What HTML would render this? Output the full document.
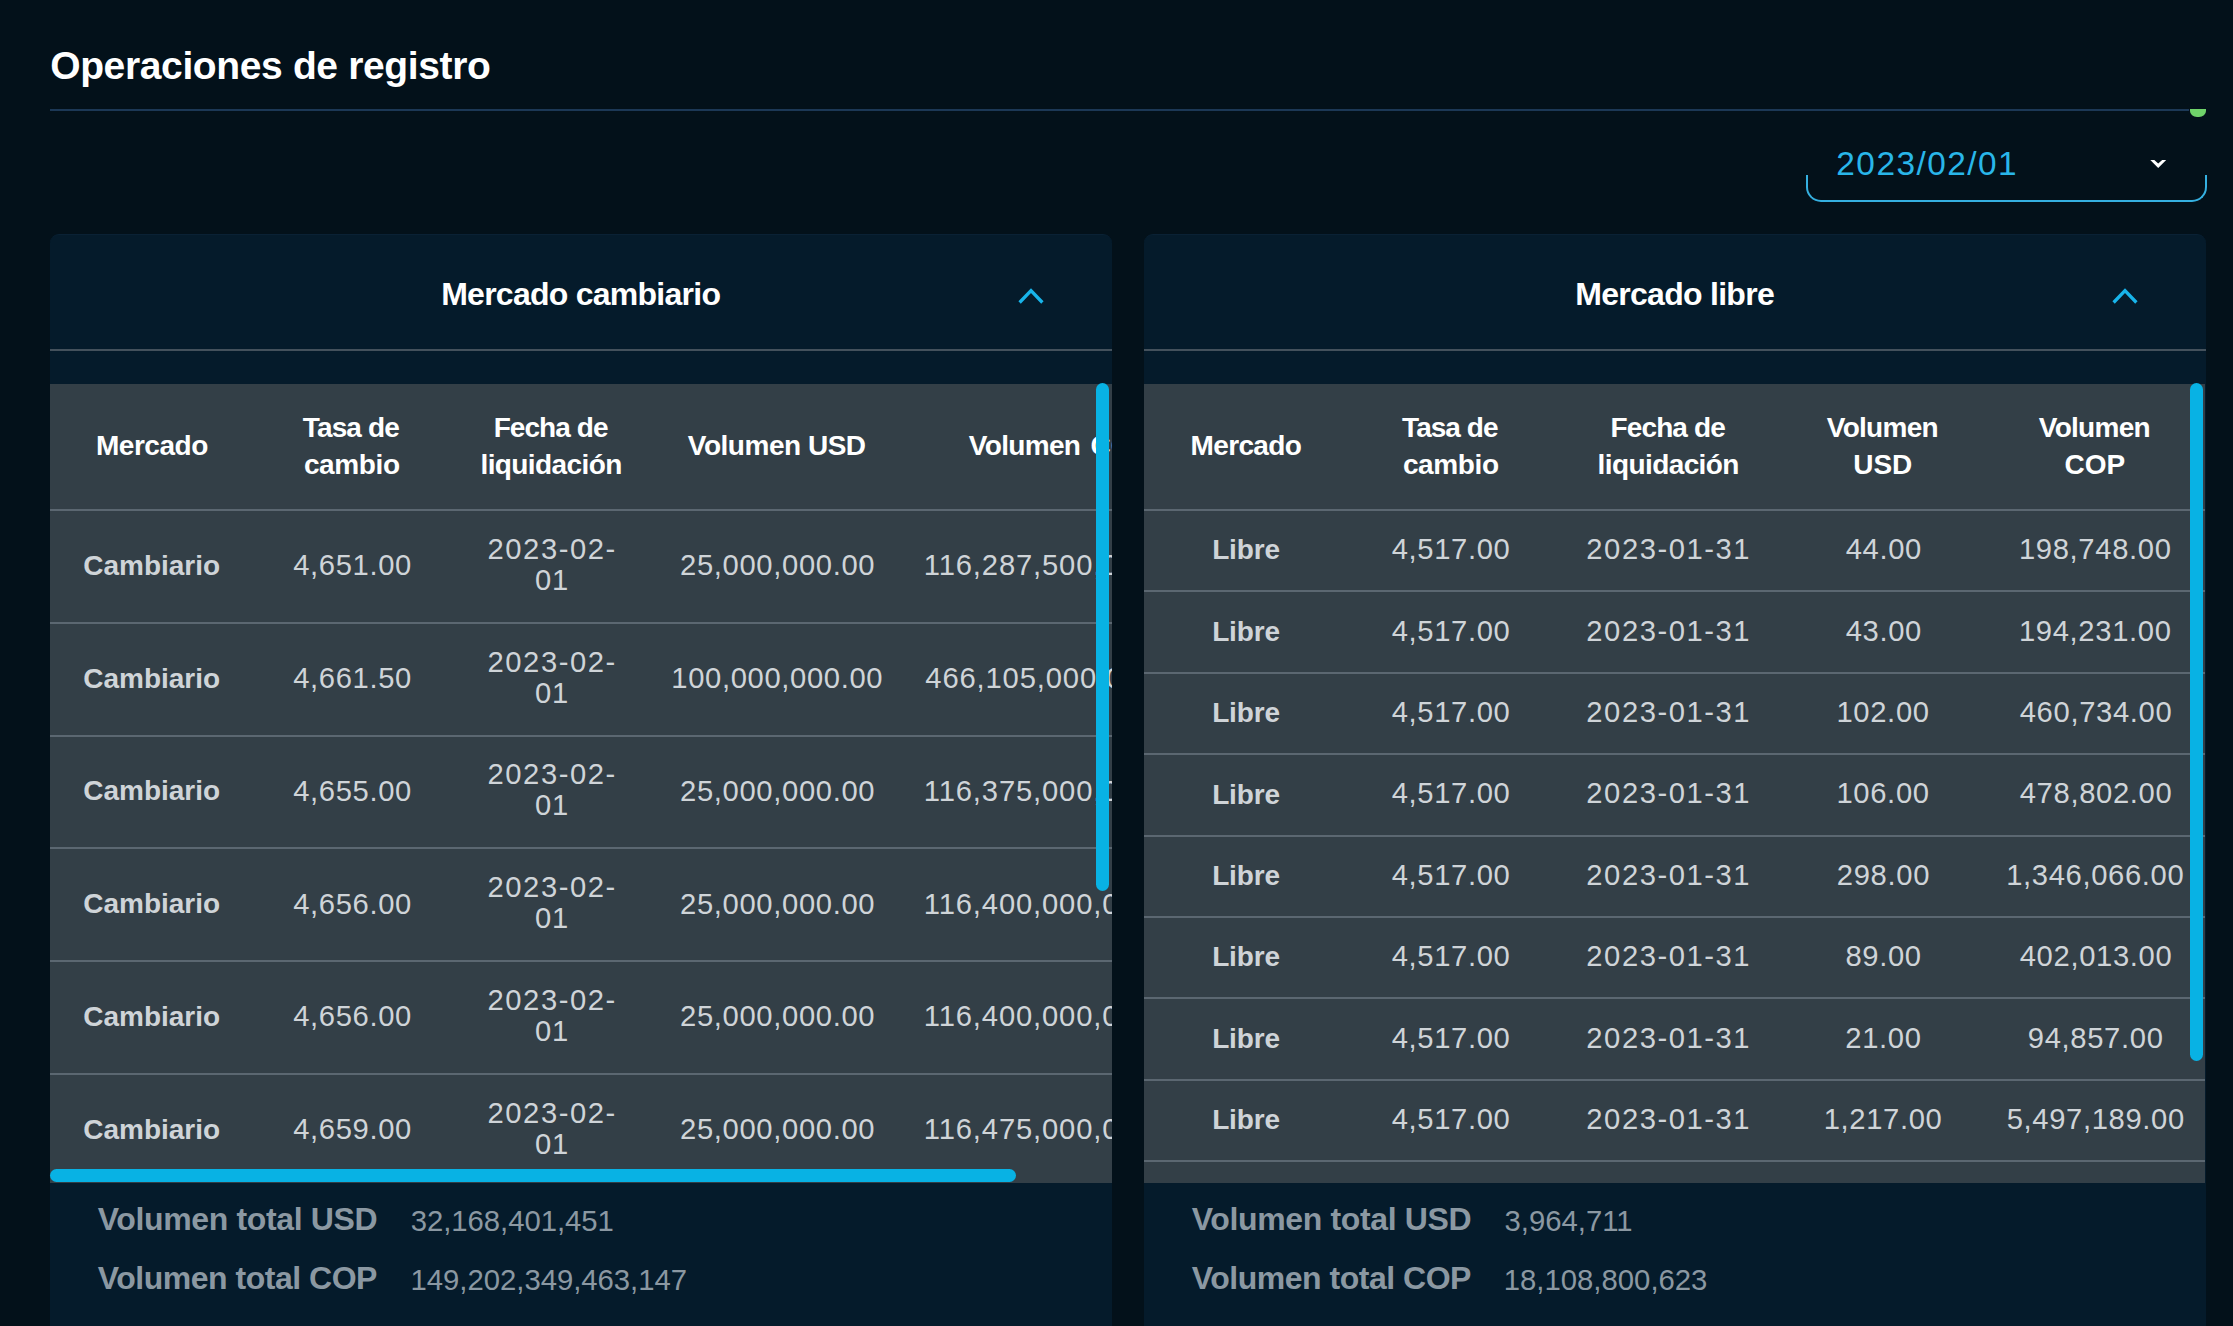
<!DOCTYPE html>
<html><head><meta charset="utf-8"><style>
html,body{margin:0;padding:0;}
body{width:2233px;height:1326px;overflow:hidden;background:#03111a;position:relative;font-family:"Liberation Sans",sans-serif;}
.t{position:absolute;white-space:nowrap;}
.r{position:absolute;box-sizing:border-box;}
svg.r{box-sizing:content-box;}
</style></head><body>
<div class="t" style="top:45.99px;font-size:39.00px;line-height:39.00px;font-weight:bold;color:#ffffff;letter-spacing:-0.365px;left:50.20px;">Operaciones de registro</div>
<div class="r" style="left:50px;top:109px;width:2139px;height:2px;background:#1c3856;"></div>
<div class="r" style="left:2190px;top:109px;width:16px;height:8px;background:#6fd36a;border-radius:0 0 7px 7px / 0 0 6px 6px;"></div>
<div class="t" style="top:146.73px;font-size:33.40px;line-height:33.40px;font-weight:normal;color:#29b6e9;letter-spacing:1.461px;left:1836.32px;">2023/02/01</div>
<div class="r" style="left:1805.5px;top:175px;width:401px;height:27px;border:2.5px solid #35b0e0;border-top:none;border-radius:0 0 15px 15px;"></div>
<svg class="r" style="left:2148px;top:157px" width="20" height="14" viewBox="0 0 20 14"><path d="M2.3 3 L6.3 3 L10.2 6.6 L14.2 3 L18.2 3 L10.2 11 Z" fill="#fff"/></svg>
<div class="r" style="left:50px;top:234px;width:1062px;height:1200px;background:#051b2b;border-radius:9px;border-top:1px solid #0a2134;"></div>
<div class="r" style="left:50px;top:349px;width:1062px;height:2px;background:#44515c;"></div>
<div class="t" style="top:278.41px;font-size:32.00px;line-height:32.00px;font-weight:bold;color:#ffffff;letter-spacing:-0.742px;left:441.16px;">Mercado cambiario</div>
<svg class="r" style="left:1015px;top:283px" width="32" height="26" viewBox="0 0 32 26"><path d="M4.6 19.5 L16 7.6 L27.4 19.5" fill="none" stroke="#18b4ea" stroke-width="3.3"/></svg>
<div class="r" style="left:0;top:0;width:2233px;height:1326px;clip-path:inset(384px 1121px 143px 50px);"><div class="r" style="left:50px;top:384px;width:1062px;height:799px;background:#333f47;"></div><div class="t" style="top:432.30px;font-size:28.00px;line-height:28.00px;font-weight:bold;color:#ffffff;letter-spacing:-0.480px;left:95.98px;">Mercado</div><div class="t" style="top:413.60px;font-size:28.00px;line-height:28.00px;font-weight:bold;color:#ffffff;letter-spacing:-0.867px;left:302.79px;">Tasa de</div><div class="t" style="top:451.30px;font-size:28.00px;line-height:28.00px;font-weight:bold;color:#ffffff;letter-spacing:-0.368px;left:303.91px;">cambio</div><div class="t" style="top:413.60px;font-size:28.00px;line-height:28.00px;font-weight:bold;color:#ffffff;letter-spacing:-0.936px;left:493.63px;">Fecha de</div><div class="t" style="top:451.30px;font-size:28.00px;line-height:28.00px;font-weight:bold;color:#ffffff;letter-spacing:-0.589px;left:480.44px;">liquidación</div><div class="t" style="top:432.30px;font-size:28.00px;line-height:28.00px;font-weight:bold;color:#ffffff;letter-spacing:-0.476px;left:687.81px;">Volumen USD</div><div class="t" style="top:432.30px;font-size:28.00px;line-height:28.00px;font-weight:bold;color:#ffffff;letter-spacing:-0.668px;left:968.81px;">Volumen</div><div class="t" style="top:432.30px;font-size:28.00px;line-height:28.00px;font-weight:bold;color:#ffffff;letter-spacing:0.000px;left:1090.45px;">COP</div><div class="r" style="left:50px;top:509px;width:1062px;height:2px;background:#5b6771;"></div><div class="t" style="top:551.80px;font-size:28.00px;line-height:28.00px;font-weight:bold;color:#cfd4d8;letter-spacing:-0.010px;left:83.25px;">Cambiario</div><div class="t" style="top:551.28px;font-size:29.20px;line-height:29.20px;font-weight:normal;color:#cfd4d8;letter-spacing:0.650px;left:293.13px;">4,651.00</div><div class="t" style="top:534.78px;font-size:29.20px;line-height:29.20px;font-weight:normal;color:#cfd4d8;letter-spacing:1.550px;left:487.55px;">2023-02-</div><div class="t" style="top:565.78px;font-size:29.20px;line-height:29.20px;font-weight:normal;color:#cfd4d8;letter-spacing:0.650px;left:535.08px;">01</div><div class="t" style="top:551.28px;font-size:29.20px;line-height:29.20px;font-weight:normal;color:#cfd4d8;letter-spacing:0.650px;left:680.07px;">25,000,000.00</div><div class="t" style="top:551.28px;font-size:29.20px;line-height:29.20px;font-weight:normal;color:#cfd4d8;letter-spacing:0.850px;left:923.78px;">116,287,500,000.00</div><div class="r" style="left:50px;top:622px;width:1062px;height:2px;background:#5b6771;"></div><div class="t" style="top:664.55px;font-size:28.00px;line-height:28.00px;font-weight:bold;color:#cfd4d8;letter-spacing:-0.010px;left:83.25px;">Cambiario</div><div class="t" style="top:664.03px;font-size:29.20px;line-height:29.20px;font-weight:normal;color:#cfd4d8;letter-spacing:0.650px;left:293.13px;">4,661.50</div><div class="t" style="top:647.53px;font-size:29.20px;line-height:29.20px;font-weight:normal;color:#cfd4d8;letter-spacing:1.550px;left:487.55px;">2023-02-</div><div class="t" style="top:678.53px;font-size:29.20px;line-height:29.20px;font-weight:normal;color:#cfd4d8;letter-spacing:0.650px;left:535.08px;">01</div><div class="t" style="top:664.03px;font-size:29.20px;line-height:29.20px;font-weight:normal;color:#cfd4d8;letter-spacing:0.650px;left:671.25px;">100,000,000.00</div><div class="t" style="top:664.03px;font-size:29.20px;line-height:29.20px;font-weight:normal;color:#cfd4d8;letter-spacing:0.850px;left:925.33px;">466,105,000,000.00</div><div class="r" style="left:50px;top:735px;width:1062px;height:2px;background:#5b6771;"></div><div class="t" style="top:777.30px;font-size:28.00px;line-height:28.00px;font-weight:bold;color:#cfd4d8;letter-spacing:-0.010px;left:83.25px;">Cambiario</div><div class="t" style="top:776.78px;font-size:29.20px;line-height:29.20px;font-weight:normal;color:#cfd4d8;letter-spacing:0.650px;left:293.13px;">4,655.00</div><div class="t" style="top:760.28px;font-size:29.20px;line-height:29.20px;font-weight:normal;color:#cfd4d8;letter-spacing:1.550px;left:487.55px;">2023-02-</div><div class="t" style="top:791.28px;font-size:29.20px;line-height:29.20px;font-weight:normal;color:#cfd4d8;letter-spacing:0.650px;left:535.08px;">01</div><div class="t" style="top:776.78px;font-size:29.20px;line-height:29.20px;font-weight:normal;color:#cfd4d8;letter-spacing:0.650px;left:680.07px;">25,000,000.00</div><div class="t" style="top:776.78px;font-size:29.20px;line-height:29.20px;font-weight:normal;color:#cfd4d8;letter-spacing:0.850px;left:923.78px;">116,375,000,000.00</div><div class="r" style="left:50px;top:847px;width:1062px;height:2px;background:#5b6771;"></div><div class="t" style="top:890.05px;font-size:28.00px;line-height:28.00px;font-weight:bold;color:#cfd4d8;letter-spacing:-0.010px;left:83.25px;">Cambiario</div><div class="t" style="top:889.53px;font-size:29.20px;line-height:29.20px;font-weight:normal;color:#cfd4d8;letter-spacing:0.650px;left:293.13px;">4,656.00</div><div class="t" style="top:873.03px;font-size:29.20px;line-height:29.20px;font-weight:normal;color:#cfd4d8;letter-spacing:1.550px;left:487.55px;">2023-02-</div><div class="t" style="top:904.03px;font-size:29.20px;line-height:29.20px;font-weight:normal;color:#cfd4d8;letter-spacing:0.650px;left:535.08px;">01</div><div class="t" style="top:889.53px;font-size:29.20px;line-height:29.20px;font-weight:normal;color:#cfd4d8;letter-spacing:0.650px;left:680.07px;">25,000,000.00</div><div class="t" style="top:889.53px;font-size:29.20px;line-height:29.20px;font-weight:normal;color:#cfd4d8;letter-spacing:0.850px;left:923.78px;">116,400,000,000.00</div><div class="r" style="left:50px;top:960px;width:1062px;height:2px;background:#5b6771;"></div><div class="t" style="top:1002.80px;font-size:28.00px;line-height:28.00px;font-weight:bold;color:#cfd4d8;letter-spacing:-0.010px;left:83.25px;">Cambiario</div><div class="t" style="top:1002.28px;font-size:29.20px;line-height:29.20px;font-weight:normal;color:#cfd4d8;letter-spacing:0.650px;left:293.13px;">4,656.00</div><div class="t" style="top:985.78px;font-size:29.20px;line-height:29.20px;font-weight:normal;color:#cfd4d8;letter-spacing:1.550px;left:487.55px;">2023-02-</div><div class="t" style="top:1016.78px;font-size:29.20px;line-height:29.20px;font-weight:normal;color:#cfd4d8;letter-spacing:0.650px;left:535.08px;">01</div><div class="t" style="top:1002.28px;font-size:29.20px;line-height:29.20px;font-weight:normal;color:#cfd4d8;letter-spacing:0.650px;left:680.07px;">25,000,000.00</div><div class="t" style="top:1002.28px;font-size:29.20px;line-height:29.20px;font-weight:normal;color:#cfd4d8;letter-spacing:0.850px;left:923.78px;">116,400,000,000.00</div><div class="r" style="left:50px;top:1073px;width:1062px;height:2px;background:#5b6771;"></div><div class="t" style="top:1115.55px;font-size:28.00px;line-height:28.00px;font-weight:bold;color:#cfd4d8;letter-spacing:-0.010px;left:83.25px;">Cambiario</div><div class="t" style="top:1115.03px;font-size:29.20px;line-height:29.20px;font-weight:normal;color:#cfd4d8;letter-spacing:0.650px;left:293.13px;">4,659.00</div><div class="t" style="top:1098.53px;font-size:29.20px;line-height:29.20px;font-weight:normal;color:#cfd4d8;letter-spacing:1.550px;left:487.55px;">2023-02-</div><div class="t" style="top:1129.53px;font-size:29.20px;line-height:29.20px;font-weight:normal;color:#cfd4d8;letter-spacing:0.650px;left:535.08px;">01</div><div class="t" style="top:1115.03px;font-size:29.20px;line-height:29.20px;font-weight:normal;color:#cfd4d8;letter-spacing:0.650px;left:680.07px;">25,000,000.00</div><div class="t" style="top:1115.03px;font-size:29.20px;line-height:29.20px;font-weight:normal;color:#cfd4d8;letter-spacing:0.850px;left:923.78px;">116,475,000,000.00</div></div>
<div class="r" style="left:1096px;top:383px;width:12.5px;height:508px;background:#08b2e4;border-radius:7px;"></div>
<div class="r" style="left:50px;top:1168.5px;width:966px;height:13px;background:#08b2e4;border-radius:7px;"></div>
<div class="t" style="top:1203.41px;font-size:32.00px;line-height:32.00px;font-weight:bold;color:#8b98a2;letter-spacing:-0.360px;left:97.78px;">Volumen total USD</div>
<div class="t" style="top:1262.41px;font-size:32.00px;line-height:32.00px;font-weight:bold;color:#8b98a2;letter-spacing:-0.487px;left:97.78px;">Volumen total COP</div>
<div class="r" style="left:1144px;top:234px;width:1062px;height:1200px;background:#051b2b;border-radius:9px;border-top:1px solid #0a2134;"></div>
<div class="r" style="left:1144px;top:349px;width:1062px;height:2px;background:#44515c;"></div>
<div class="t" style="top:278.41px;font-size:32.00px;line-height:32.00px;font-weight:bold;color:#ffffff;letter-spacing:-0.711px;left:1575.21px;">Mercado libre</div>
<svg class="r" style="left:2109px;top:283px" width="32" height="26" viewBox="0 0 32 26"><path d="M4.6 19.5 L16 7.6 L27.4 19.5" fill="none" stroke="#18b4ea" stroke-width="3.3"/></svg>
<div class="r" style="left:0;top:0;width:2233px;height:1326px;clip-path:inset(384px 28px 143px 1144px);"><div class="r" style="left:1144px;top:384px;width:1062px;height:799px;background:#333f47;"></div><div class="t" style="top:432.30px;font-size:28.00px;line-height:28.00px;font-weight:bold;color:#ffffff;letter-spacing:-0.646px;left:1190.58px;">Mercado</div><div class="t" style="top:413.60px;font-size:28.00px;line-height:28.00px;font-weight:bold;color:#ffffff;letter-spacing:-0.967px;left:1402.09px;">Tasa de</div><div class="t" style="top:451.30px;font-size:28.00px;line-height:28.00px;font-weight:bold;color:#ffffff;letter-spacing:-0.368px;left:1402.91px;">cambio</div><div class="t" style="top:413.60px;font-size:28.00px;line-height:28.00px;font-weight:bold;color:#ffffff;letter-spacing:-0.893px;left:1610.58px;">Fecha de</div><div class="t" style="top:451.30px;font-size:28.00px;line-height:28.00px;font-weight:bold;color:#ffffff;letter-spacing:-0.589px;left:1597.54px;">liquidación</div><div class="t" style="top:413.60px;font-size:28.00px;line-height:28.00px;font-weight:bold;color:#ffffff;letter-spacing:-0.718px;left:1826.81px;">Volumen</div><div class="t" style="top:451.30px;font-size:28.00px;line-height:28.00px;font-weight:bold;color:#ffffff;letter-spacing:0.000px;left:1853.19px;">USD</div><div class="t" style="top:413.60px;font-size:28.00px;line-height:28.00px;font-weight:bold;color:#ffffff;letter-spacing:-0.718px;left:2038.81px;">Volumen</div><div class="t" style="top:451.30px;font-size:28.00px;line-height:28.00px;font-weight:bold;color:#ffffff;letter-spacing:0.000px;left:2064.57px;">COP</div><div class="r" style="left:1144px;top:509px;width:1062px;height:2px;background:#5b6771;"></div><div class="t" style="top:536.30px;font-size:28.00px;line-height:28.00px;font-weight:bold;color:#cfd4d8;letter-spacing:-0.156px;left:1212.13px;">Libre</div><div class="t" style="top:535.28px;font-size:29.20px;line-height:29.20px;font-weight:normal;color:#cfd4d8;letter-spacing:0.650px;left:1391.63px;">4,517.00</div><div class="t" style="top:535.28px;font-size:29.20px;line-height:29.20px;font-weight:normal;color:#cfd4d8;letter-spacing:1.550px;left:1586.32px;">2023-01-31</div><div class="t" style="top:535.28px;font-size:29.20px;line-height:29.20px;font-weight:normal;color:#cfd4d8;letter-spacing:0.650px;left:1845.70px;">44.00</div><div class="t" style="top:535.28px;font-size:29.20px;line-height:29.20px;font-weight:normal;color:#cfd4d8;letter-spacing:0.650px;left:2018.96px;">198,748.00</div><div class="r" style="left:1144px;top:590px;width:1062px;height:2px;background:#5b6771;"></div><div class="t" style="top:617.70px;font-size:28.00px;line-height:28.00px;font-weight:bold;color:#cfd4d8;letter-spacing:-0.156px;left:1212.13px;">Libre</div><div class="t" style="top:616.68px;font-size:29.20px;line-height:29.20px;font-weight:normal;color:#cfd4d8;letter-spacing:0.650px;left:1391.63px;">4,517.00</div><div class="t" style="top:616.68px;font-size:29.20px;line-height:29.20px;font-weight:normal;color:#cfd4d8;letter-spacing:1.550px;left:1586.32px;">2023-01-31</div><div class="t" style="top:616.68px;font-size:29.20px;line-height:29.20px;font-weight:normal;color:#cfd4d8;letter-spacing:0.650px;left:1845.70px;">43.00</div><div class="t" style="top:616.68px;font-size:29.20px;line-height:29.20px;font-weight:normal;color:#cfd4d8;letter-spacing:0.650px;left:2018.96px;">194,231.00</div><div class="r" style="left:1144px;top:672px;width:1062px;height:2px;background:#5b6771;"></div><div class="t" style="top:699.10px;font-size:28.00px;line-height:28.00px;font-weight:bold;color:#cfd4d8;letter-spacing:-0.156px;left:1212.13px;">Libre</div><div class="t" style="top:698.08px;font-size:29.20px;line-height:29.20px;font-weight:normal;color:#cfd4d8;letter-spacing:0.650px;left:1391.63px;">4,517.00</div><div class="t" style="top:698.08px;font-size:29.20px;line-height:29.20px;font-weight:normal;color:#cfd4d8;letter-spacing:1.550px;left:1586.32px;">2023-01-31</div><div class="t" style="top:698.08px;font-size:29.20px;line-height:29.20px;font-weight:normal;color:#cfd4d8;letter-spacing:0.650px;left:1836.48px;">102.00</div><div class="t" style="top:698.08px;font-size:29.20px;line-height:29.20px;font-weight:normal;color:#cfd4d8;letter-spacing:0.650px;left:2019.74px;">460,734.00</div><div class="r" style="left:1144px;top:753px;width:1062px;height:2px;background:#5b6771;"></div><div class="t" style="top:780.50px;font-size:28.00px;line-height:28.00px;font-weight:bold;color:#cfd4d8;letter-spacing:-0.156px;left:1212.13px;">Libre</div><div class="t" style="top:779.48px;font-size:29.20px;line-height:29.20px;font-weight:normal;color:#cfd4d8;letter-spacing:0.650px;left:1391.63px;">4,517.00</div><div class="t" style="top:779.48px;font-size:29.20px;line-height:29.20px;font-weight:normal;color:#cfd4d8;letter-spacing:1.550px;left:1586.32px;">2023-01-31</div><div class="t" style="top:779.48px;font-size:29.20px;line-height:29.20px;font-weight:normal;color:#cfd4d8;letter-spacing:0.650px;left:1836.48px;">106.00</div><div class="t" style="top:779.48px;font-size:29.20px;line-height:29.20px;font-weight:normal;color:#cfd4d8;letter-spacing:0.650px;left:2019.74px;">478,802.00</div><div class="r" style="left:1144px;top:835px;width:1062px;height:2px;background:#5b6771;"></div><div class="t" style="top:861.90px;font-size:28.00px;line-height:28.00px;font-weight:bold;color:#cfd4d8;letter-spacing:-0.156px;left:1212.13px;">Libre</div><div class="t" style="top:860.88px;font-size:29.20px;line-height:29.20px;font-weight:normal;color:#cfd4d8;letter-spacing:0.650px;left:1391.63px;">4,517.00</div><div class="t" style="top:860.88px;font-size:29.20px;line-height:29.20px;font-weight:normal;color:#cfd4d8;letter-spacing:1.550px;left:1586.32px;">2023-01-31</div><div class="t" style="top:860.88px;font-size:29.20px;line-height:29.20px;font-weight:normal;color:#cfd4d8;letter-spacing:0.650px;left:1836.86px;">298.00</div><div class="t" style="top:860.88px;font-size:29.20px;line-height:29.20px;font-weight:normal;color:#cfd4d8;letter-spacing:0.650px;left:2006.14px;">1,346,066.00</div><div class="r" style="left:1144px;top:916px;width:1062px;height:2px;background:#5b6771;"></div><div class="t" style="top:943.30px;font-size:28.00px;line-height:28.00px;font-weight:bold;color:#cfd4d8;letter-spacing:-0.156px;left:1212.13px;">Libre</div><div class="t" style="top:942.28px;font-size:29.20px;line-height:29.20px;font-weight:normal;color:#cfd4d8;letter-spacing:0.650px;left:1391.63px;">4,517.00</div><div class="t" style="top:942.28px;font-size:29.20px;line-height:29.20px;font-weight:normal;color:#cfd4d8;letter-spacing:1.550px;left:1586.32px;">2023-01-31</div><div class="t" style="top:942.28px;font-size:29.20px;line-height:29.20px;font-weight:normal;color:#cfd4d8;letter-spacing:0.650px;left:1845.40px;">89.00</div><div class="t" style="top:942.28px;font-size:29.20px;line-height:29.20px;font-weight:normal;color:#cfd4d8;letter-spacing:0.650px;left:2019.74px;">402,013.00</div><div class="r" style="left:1144px;top:997px;width:1062px;height:2px;background:#5b6771;"></div><div class="t" style="top:1024.70px;font-size:28.00px;line-height:28.00px;font-weight:bold;color:#cfd4d8;letter-spacing:-0.156px;left:1212.13px;">Libre</div><div class="t" style="top:1023.68px;font-size:29.20px;line-height:29.20px;font-weight:normal;color:#cfd4d8;letter-spacing:0.650px;left:1391.63px;">4,517.00</div><div class="t" style="top:1023.68px;font-size:29.20px;line-height:29.20px;font-weight:normal;color:#cfd4d8;letter-spacing:1.550px;left:1586.32px;">2023-01-31</div><div class="t" style="top:1023.68px;font-size:29.20px;line-height:29.20px;font-weight:normal;color:#cfd4d8;letter-spacing:0.650px;left:1845.30px;">21.00</div><div class="t" style="top:1023.68px;font-size:29.20px;line-height:29.20px;font-weight:normal;color:#cfd4d8;letter-spacing:0.650px;left:2027.83px;">94,857.00</div><div class="r" style="left:1144px;top:1079px;width:1062px;height:2px;background:#5b6771;"></div><div class="t" style="top:1106.10px;font-size:28.00px;line-height:28.00px;font-weight:bold;color:#cfd4d8;letter-spacing:-0.156px;left:1212.13px;">Libre</div><div class="t" style="top:1105.08px;font-size:29.20px;line-height:29.20px;font-weight:normal;color:#cfd4d8;letter-spacing:0.650px;left:1391.63px;">4,517.00</div><div class="t" style="top:1105.08px;font-size:29.20px;line-height:29.20px;font-weight:normal;color:#cfd4d8;letter-spacing:1.550px;left:1586.32px;">2023-01-31</div><div class="t" style="top:1105.08px;font-size:29.20px;line-height:29.20px;font-weight:normal;color:#cfd4d8;letter-spacing:0.650px;left:1823.65px;">1,217.00</div><div class="t" style="top:1105.08px;font-size:29.20px;line-height:29.20px;font-weight:normal;color:#cfd4d8;letter-spacing:0.650px;left:2006.66px;">5,497,189.00</div><div class="r" style="left:1144px;top:1160px;width:1062px;height:2px;background:#5b6771;"></div></div>
<div class="r" style="left:2190px;top:383px;width:12.5px;height:678px;background:#08b2e4;border-radius:7px;"></div>
<div class="t" style="top:1203.41px;font-size:32.00px;line-height:32.00px;font-weight:bold;color:#8b98a2;letter-spacing:-0.360px;left:1191.78px;">Volumen total USD</div>
<div class="t" style="top:1262.41px;font-size:32.00px;line-height:32.00px;font-weight:bold;color:#8b98a2;letter-spacing:-0.487px;left:1191.78px;">Volumen total COP</div>
<div class="t" style="top:1206.20px;font-size:29.30px;line-height:29.30px;font-weight:normal;color:#8b98a2;letter-spacing:-0.040px;left:410.68px;">32,168,401,451</div>
<div class="t" style="top:1265.20px;font-size:29.30px;line-height:29.30px;font-weight:normal;color:#8b98a2;letter-spacing:-0.027px;left:410.57px;">149,202,349,463,147</div>
<div class="t" style="top:1206.20px;font-size:29.30px;line-height:29.30px;font-weight:normal;color:#8b98a2;letter-spacing:0.000px;left:1504.48px;">3,964,711</div>
<div class="t" style="top:1265.20px;font-size:29.30px;line-height:29.30px;font-weight:normal;color:#8b98a2;letter-spacing:0.000px;left:1503.77px;">18,108,800,623</div>
</body></html>
